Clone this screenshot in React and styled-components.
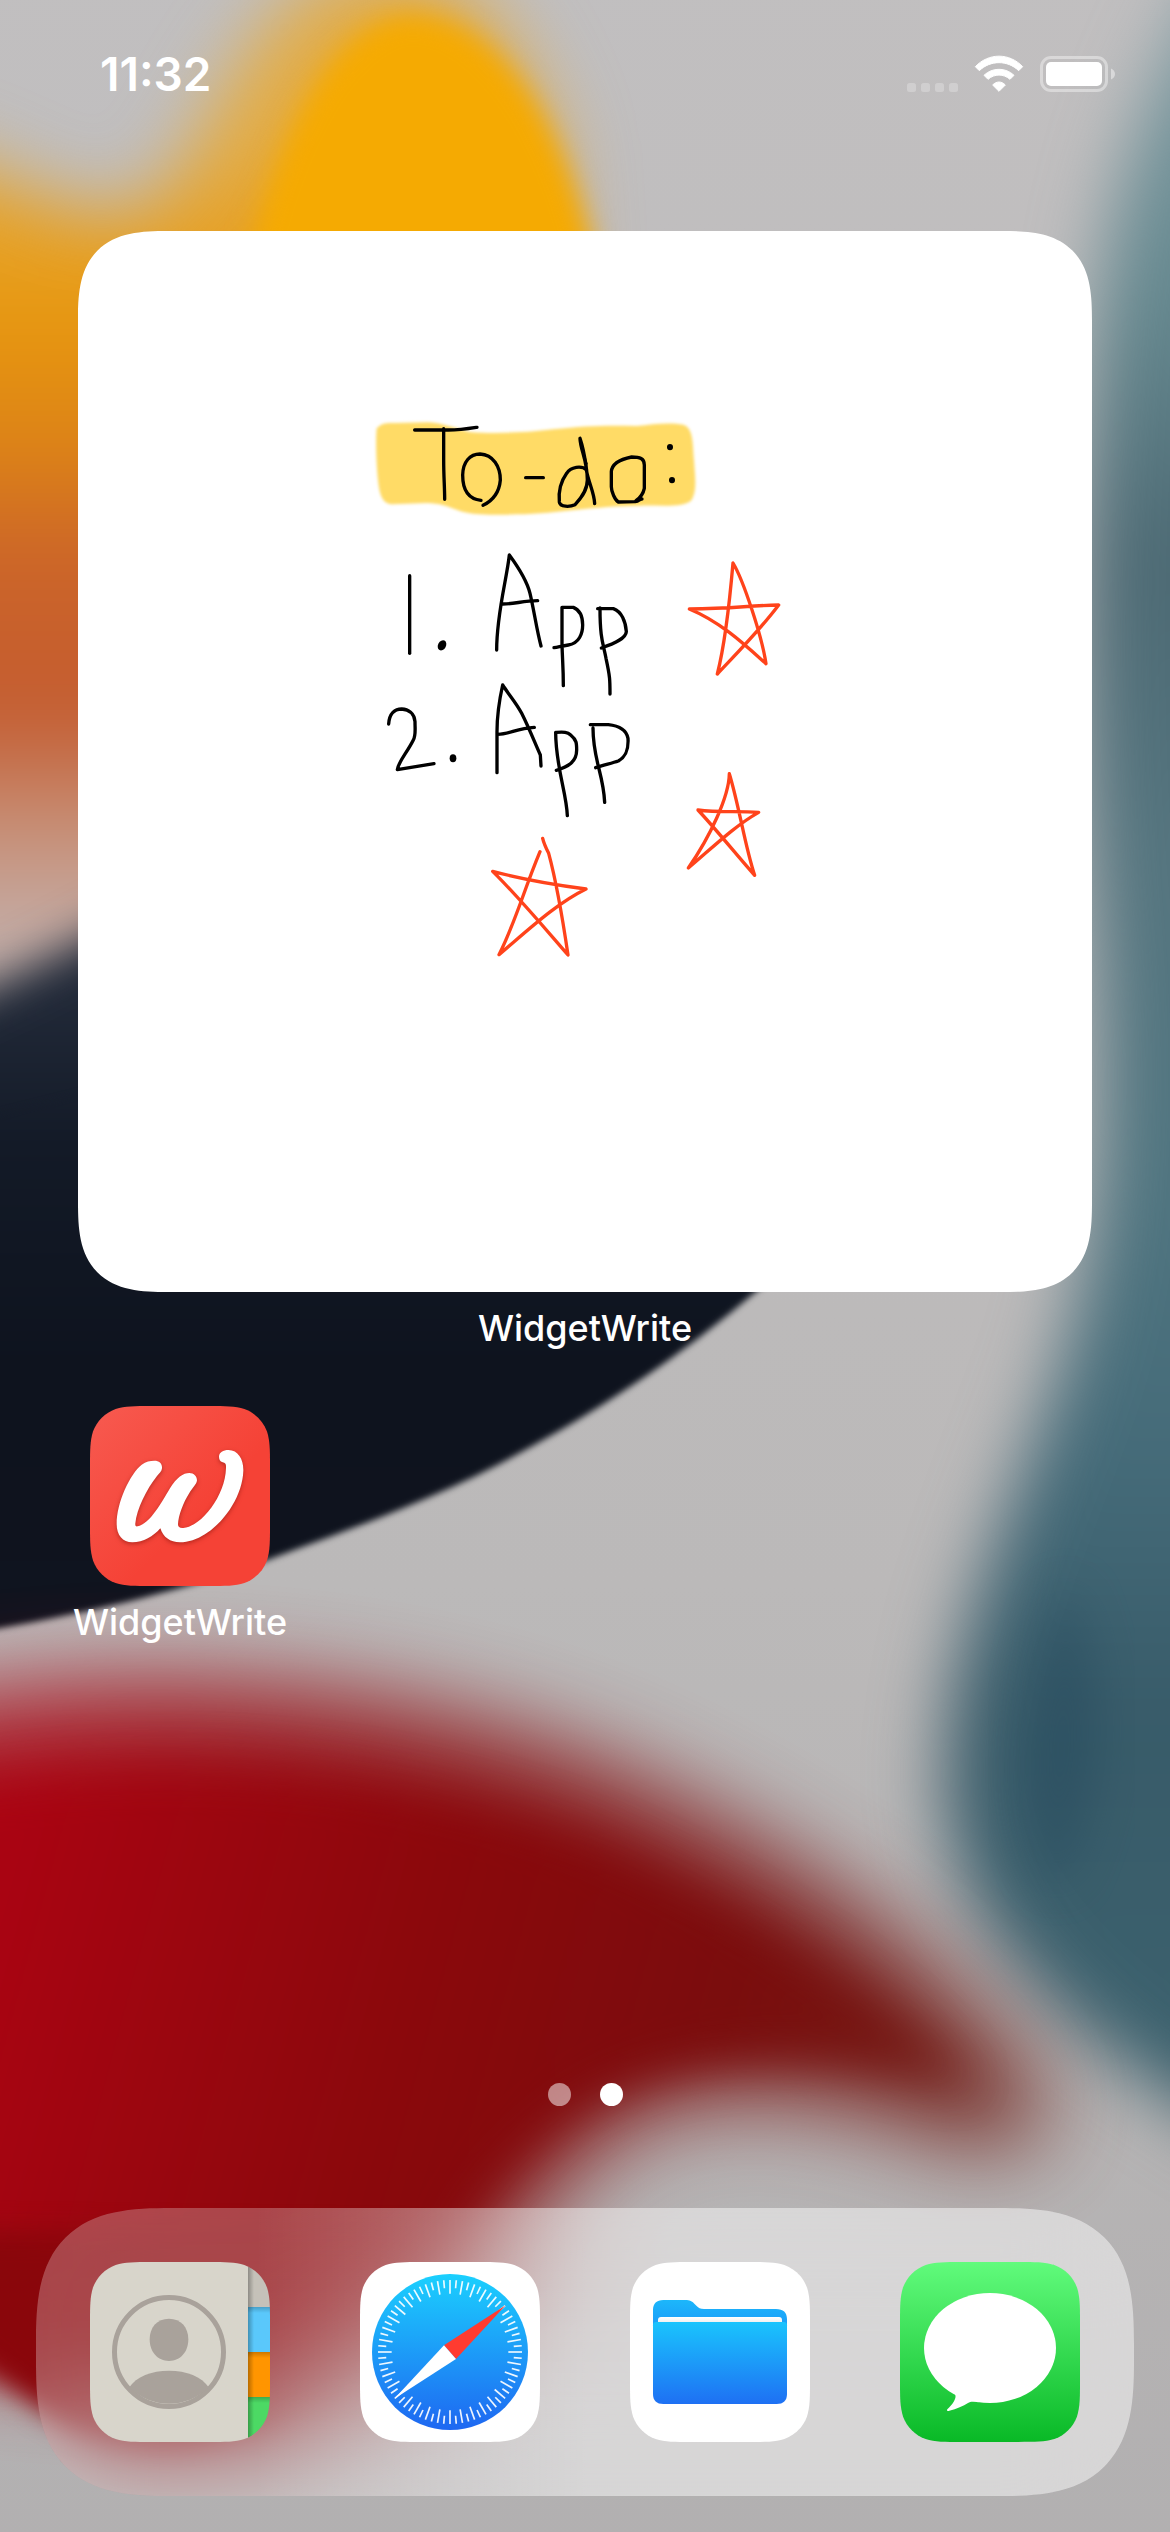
import React from "react";
import styled, { createGlobalStyle } from "styled-components";

const GlobalStyle = createGlobalStyle`
  *, *::before, *::after { box-sizing: border-box; }
  body {
    margin: 0;
    background: #b5b3b4;
    font-family: Inter, "Liberation Sans", sans-serif;
    -webkit-font-smoothing: antialiased;
  }
`;

const Home = styled.div`
  position: relative;
  isolation: isolate;
  overflow: hidden;
  display: flex;
  flex-direction: column;
  min-height: 100vh;
  color: #fff;
`;

const WallpaperLayer = styled.div`
  position: absolute;
  inset: 0;
  z-index: -1;
  svg { display: block; width: 100%; height: 100%; }
`;

const StatusBar = styled.header`
  display: flex;
  align-items: center;
  justify-content: space-between;
  height: 148px;
  padding: 0 54px 0 100px;
`;

const Clock = styled.time`
  font-size: 46px;
  line-height: 56px;
  font-weight: 600;
`;

const StatusIcons = styled.div`
  display: flex;
  align-items: center;
  gap: 16px;
  svg { display: block; }
`;

const Main = styled.main`
  flex: 1;
  display: flex;
  flex-direction: column;
  gap: 56px;
  padding-top: 83px;
`;

const WidgetFigure = styled.figure`
  display: flex;
  flex-direction: column;
  align-items: center;
  gap: 14px;
  margin: 0 78px;
`;

const WidgetCard = styled.div`
  width: 100%;
  background: #fff;
  border-radius: 68px;
  @supports (corner-shape: superellipse(1.5)) {
    border-radius: 90px;
    corner-shape: superellipse(1.5);
  }
  svg { display: block; width: 100%; height: auto; }
`;

const WidgetLabel = styled.figcaption`
  font-size: 36px;
  line-height: 44px;
  font-weight: 500;
`;

const AppGrid = styled.div`
  display: grid;
  grid-template-columns: repeat(4, 1fr);
  justify-items: center;
  padding: 0 45px;
`;

const AppButton = styled.button`
  display: flex;
  flex-direction: column;
  align-items: center;
  gap: 14px;
  padding: 0;
  border: 0;
  background: none;
  color: inherit;
  font-family: inherit;
  font-size: 36px;
  line-height: 44px;
  font-weight: 500;
  cursor: pointer;
  svg { display: block; width: 180px; height: 180px; }
`;

const PageDots = styled.nav`
  display: flex;
  justify-content: center;
  gap: 29px;
  margin-bottom: 102px;
`;

const PageDot = styled.button`
  width: 23px;
  height: 23px;
  padding: 0;
  border: 0;
  border-radius: 50%;
  background: ${(p) => (p.$active ? "#fff" : "rgba(255, 255, 255, 0.5)")};
  cursor: pointer;
`;

const Dock = styled.footer`
  display: grid;
  grid-template-columns: repeat(4, 1fr);
  justify-items: center;
  margin: 0 36px 36px;
  padding: 54px 9px;
  border-radius: 102px;
  background: linear-gradient(90deg, rgba(255, 255, 255, 0.26) 20%, rgba(255, 255, 255, 0.47) 50%);
  backdrop-filter: blur(56px);
  @supports (corner-shape: superellipse(1.5)) {
    border-radius: 136px;
    corner-shape: superellipse(1.5);
  }
`;

function Blur({ id, amount }) {
  return (
    <filter id={id} x="-50%" y="-50%" width="200%" height="200%" colorInterpolationFilters="sRGB">
      <feGaussianBlur stdDeviation={amount} />
    </filter>
  );
}

function Wallpaper() {
  return (
    <WallpaperLayer aria-hidden="true">
      <svg viewBox="0 0 725 1568" preserveAspectRatio="xMidYMid slice">
        <defs>
          <linearGradient id="wpBase" x1="0" y1="0" x2="0" y2="1">
            <stop offset="0" stopColor="#c2c0c1" />
            <stop offset="0.6" stopColor="#bbb9b9" />
            <stop offset="1" stopColor="#afadae" />
          </linearGradient>
          <linearGradient id="wpAmber" gradientUnits="userSpaceOnUse" x1="0" y1="90" x2="0" y2="620">
            <stop offset="0" stopColor="#e3ac44" />
            <stop offset="0.2" stopColor="#e8980f" />
            <stop offset="0.36" stopColor="#dc8218" />
            <stop offset="0.48" stopColor="#cc6529" />
            <stop offset="0.66" stopColor="#c45c30" />
            <stop offset="0.8" stopColor="#c79078" />
            <stop offset="0.92" stopColor="#c4aca6" />
            <stop offset="1" stopColor="#c0b0ac" />
          </linearGradient>
          <linearGradient id="wpNavy" gradientUnits="userSpaceOnUse" x1="0" y1="610" x2="0" y2="1010">
            <stop offset="0" stopColor="#222a39" />
            <stop offset="0.25" stopColor="#131a27" />
            <stop offset="0.6" stopColor="#0e131e" />
            <stop offset="1" stopColor="#10141f" />
          </linearGradient>
          <linearGradient id="wpTeal" gradientUnits="userSpaceOnUse" x1="0" y1="0" x2="0" y2="1330">
            <stop offset="0" stopColor="#7d9ba2" />
            <stop offset="0.14" stopColor="#65888f" />
            <stop offset="0.26" stopColor="#4d6a74" />
            <stop offset="0.4" stopColor="#55757f" />
            <stop offset="0.55" stopColor="#507580" />
            <stop offset="0.68" stopColor="#456b79" />
            <stop offset="0.8" stopColor="#385b69" />
            <stop offset="1" stopColor="#3d636f" />
          </linearGradient>
          <linearGradient id="wpRed" gradientUnits="userSpaceOnUse" x1="0" y1="1150" x2="640" y2="1320">
            <stop offset="0" stopColor="#aa0412" />
            <stop offset="0.4" stopColor="#8b080c" />
            <stop offset="0.7" stopColor="#7a0d0d" />
            <stop offset="1" stopColor="#6f2018" />
          </linearGradient>
          <Blur id="blurWide" amount={28} />
          <Blur id="blurSoft" amount={22} />
          <Blur id="blurMid" amount={14} />
          <Blur id="blurFine" amount={8} />
          <Blur id="blurEdge" amount={2} />
        </defs>
        <rect x="-200" y="-200" width="1125" height="1968" fill="url(#wpBase)" />
        <path d="M-120 85 C-30 70 30 140 80 130 C130 115 140 -10 235 -22 C290 -28 325 30 345 90 L365 400 L200 640 L-120 640 Z" fill="url(#wpAmber)" filter="url(#blurSoft)" />
        <path d="M138 260 C152 120 192 24 245 10 C305 0 354 76 374 186 L374 300 L138 300 Z" fill="#f5aa02" filter="url(#blurFine)" />
        <path d="M-80 640 C0 614 60 574 140 540 L300 600 L300 850 L-80 850 Z" fill="url(#wpNavy)" filter="url(#blurMid)" />
        <path d="M-40 700 L120 660 L520 680 L512 758 C490 782 478 792 461 806 C423 838 378 869 329 896 C278 925 225 944 166 966 C110 986 50 1001 -40 1015 Z" fill="url(#wpNavy)" filter="url(#blurEdge)" />
        <path d="M840 -60 L752 -20 C706 60 684 130 676 220 C668 330 666 430 674 540 C686 660 684 750 662 830 C634 920 585 1010 585 1100 C585 1190 650 1270 840 1362 Z" fill="url(#wpTeal)" filter="url(#blurSoft)" />
        <path d="M660 980 C630 1060 625 1120 655 1170 C685 1110 690 1050 660 980 Z" fill="#25495d" opacity="0.5" filter="url(#blurMid)" />
        <path d="M-140 1080 C20 1020 230 1030 380 1095 C500 1148 590 1215 645 1295 C660 1325 620 1340 585 1325 C520 1300 450 1290 400 1312 C350 1338 320 1390 290 1440 L220 1480 L-140 1450 Z" fill="url(#wpRed)" opacity="0.85" filter="url(#blurWide)" />
        <path d="M-140 1130 C60 1070 240 1090 370 1140 C450 1176 530 1222 600 1290 C500 1268 420 1268 360 1306 C310 1340 285 1380 262 1440 L-140 1470 Z" fill="url(#wpRed)" filter="url(#blurMid)" />
        <path d="M-140 1380 L262 1385 C245 1430 215 1470 170 1500 C120 1520 80 1520 40 1500 C15 1488 -10 1465 -60 1420 Z" fill="#8a060b" filter="url(#blurFine)" />
      </svg>
    </WallpaperLayer>
  );
}

const SQUIRCLE =
  "M61.9 0 H118.1 C135.9 0 144.8 0 154.4 3 C164.9 6.8 173.2 15.1 177 25.6 C180 35.2 180 44.1 180 61.9 V118.1 C180 135.9 180 144.8 177 154.4 C173.2 164.9 164.9 173.2 154.4 177 C144.8 180 135.9 180 118.1 180 H61.9 C44.1 180 35.2 180 25.6 177 C15.1 173.2 6.8 164.9 3 154.4 C0 144.8 0 135.9 0 118.1 V61.9 C0 44.1 0 35.2 3 25.6 C6.8 15.1 15.1 6.8 25.6 3 C35.2 0 44.1 0 61.9 0 Z";

function Gradient({ id, from, to, x2 = 0, y2 = 1 }) {
  return (
    <linearGradient id={id} x1="0" y1="0" x2={x2} y2={y2}>
      <stop offset="0" stopColor={from} />
      <stop offset="1" stopColor={to} />
    </linearGradient>
  );
}

function WidgetWriteIcon() {
  return (
    <svg viewBox="0 0 180 180" aria-hidden="true">
      <defs>
        <Gradient id="wwBg" from="#f75a50" to="#f54236" x2={0.6} y2={0.6} />
        <filter id="wwShadow" x="-20%" y="-20%" width="140%" height="150%" colorInterpolationFilters="sRGB">
          <feDropShadow dx="0" dy="5" stdDeviation="7" floodColor="#7a0d05" floodOpacity="0.5" />
        </filter>
      </defs>
      <path d={SQUIRCLE} fill="url(#wwBg)" />
      <g transform="translate(10 -7) scale(0.33333)">
        <path
          fill="#fff"
          filter="url(#wwShadow)"
          d="M163 185 C178 185 187 193 186 208 C185 218 178 222 171 231 C140 270 110 330 106 373 C105 381 108 383 113 382 C150 375 185 310 210 268 C230 235 250 222 268 222 C282 222 291 232 291 244 C290 256 278 266 268 282 C250 310 235 350 234 376 C234 385 240 388 250 387 C305 382 376 290 378 207 C379 196 376 191 368 190 C360 188 357 180 357 173 C357 160 370 153 385 153 C415 153 431 182 430 215 C427 315 330 430 240 430 C210 430 190 415 181 388 C160 412 130 430 97 430 C68 430 50 408 50 375 C50 310 90 225 125 197 C138 187 150 185 163 185 Z"
        />
      </g>
    </svg>
  );
}

const TABS = [
  { y: 90, h: 141, fill: "#c5c1b9" },
  { y: 231, h: 135, fill: "#5ac8fb" },
  { y: 366, h: 135, fill: "#ff9500" },
  { y: 501, h: 140, fill: "#4cd964" },
];

function ContactsIcon() {
  return (
    <svg viewBox="0 0 180 180" aria-hidden="true">
      <defs>
        <clipPath id="ctClip"><path d={SQUIRCLE} /></clipPath>
        <Gradient id="ctSide" from="rgba(0,0,0,0.28)" to="rgba(0,0,0,0)" x2={1} y2={0} />
        <Gradient id="ctTop" from="rgba(0,0,0,0.2)" to="rgba(0,0,0,0)" />
      </defs>
      <g clipPath="url(#ctClip)">
        <g transform="translate(-30 -32) scale(0.33333)">
          <rect x="88" y="94" width="478" height="546" fill="#d8d5cb" />
          {TABS.map((t) => (
            <rect key={t.y} x="564" y={t.y} width="70" height={t.h} fill={t.fill} />
          ))}
          {TABS.slice(1).map((t) => (
            <rect key={t.y} x="564" y={t.y} width="70" height="18" fill="url(#ctTop)" />
          ))}
          <rect x="564" y="90" width="18" height="550" fill="url(#ctSide)" />
          <circle cx="327" cy="366" r="163.5" fill="none" stroke="#a9a29b" strokeWidth="15" />
          <path d="M327 266 C363 266 385 292 385 328 C385 366 361 393 327 393 C293 393 269 366 269 328 C269 292 291 266 327 266 Z" fill="#a9a29b" />
          <path d="M208 472 C228 440 275 422 327 422 C379 422 426 440 446 472 A168 168 0 0 1 208 472 Z" fill="#a9a29b" />
        </g>
      </g>
    </svg>
  );
}

const TICKS = Array.from({ length: 72 }, (_, i) => i);

function SafariIcon() {
  return (
    <svg viewBox="0 0 180 180" aria-hidden="true">
      <defs><Gradient id="sfBg" from="#1bd0fe" to="#1e67f1" /></defs>
      <path d={SQUIRCLE} fill="#fff" />
      <g transform="translate(-300 -32) scale(0.33333)">
        <circle cx="1170" cy="366" r="234" fill="url(#sfBg)" />
        {TICKS.map((i) => (
          <line
            key={i}
            x1="1170"
            x2="1170"
            y1="150"
            y2={i % 2 ? 174 : 191}
            stroke="#fff"
            strokeOpacity="0.92"
            strokeWidth="5"
            transform={`rotate(${i * 5} 1170 366)`}
          />
        ))}
        <path d="M1337 226 L1152 346 L1188 387 Z" fill="#ff3b30" />
        <path d="M1003 506 L1152 346 L1188 387 Z" fill="#fff" />
      </g>
    </svg>
  );
}

function FilesIcon() {
  return (
    <svg viewBox="0 0 180 180" aria-hidden="true">
      <defs>
        <Gradient id="flBack" from="#1cb7fb" to="#1b98f8" />
        <Gradient id="flFront" from="#1ac4fd" to="#1e70f3" />
        <Gradient id="flPaper" from="#fff" to="#e9e9e9" />
      </defs>
      <path d={SQUIRCLE} fill="#fff" />
      <g transform="translate(-30 -32) scale(0.33333)">
        <path d="M159 240 C159 220 170 210 190 210 H256 C270 210 276 214 283 221 L290 228 C296 234 300 237 312 237 H528 C550 237 561 247 561 268 V300 H159 Z" fill="url(#flBack)" />
        <path d="M174 284 V270 Q174 261 183 261 H537 Q546 261 546 270 V284 Z" fill="url(#flPaper)" />
        <path d="M159 286 Q159 276 169 276 H551 Q561 276 561 286 V492 C561 512 550 522 530 522 H190 C170 522 159 512 159 492 Z" fill="url(#flFront)" />
      </g>
    </svg>
  );
}

function MessagesIcon() {
  return (
    <svg viewBox="0 0 180 180" aria-hidden="true">
      <defs><Gradient id="msBg" from="#61fb7c" to="#09b926" /></defs>
      <path d={SQUIRCLE} fill="url(#msBg)" />
      <g transform="translate(-300 -32) scale(0.33333)" fill="#fff">
        <ellipse cx="1170" cy="354" rx="198" ry="165" />
        <path d="M1055 484 C1068 491 1070 500 1062 514 C1057 523 1049 531 1042 538 C1039 542 1042 544 1048 542 C1070 537 1090 528 1104 519 C1112 514 1120 515 1135 517 L1160 480 Z" />
      </g>
    </svg>
  );
}

function CellularIcon() {
  return (
    <svg width="51" height="36" viewBox="0 0 51 36" role="img" aria-label="No signal">
      {[0, 14, 28, 42].map((x) => (
        <rect key={x} x={x} y="27" width="9" height="9" rx="2.5" fill="#fff" fillOpacity="0.25" />
      ))}
    </svg>
  );
}

function WifiIcon() {
  return (
    <svg width="50" height="38" viewBox="282 43 150 114" role="img" aria-label="Wi-Fi" fill="#fff" stroke="#fff" strokeWidth="3" strokeLinejoin="round">
      <path d="M286 78 C326 36 388 36 428 78 L416 90 C383 58 331 58 298 90 Z" />
      <path d="M312 104 C337 80 377 80 402 104 L390 116 C371 99 343 99 324 116 Z" />
      <path d="M357 152 L338 133 C349 121 365 121 376 133 Z" />
    </svg>
  );
}

function BatteryIcon() {
  return (
    <svg width="76" height="36" viewBox="0 0 76 36" role="img" aria-label="Battery full">
      <rect x="1.5" y="1.5" width="65" height="33" rx="9.5" fill="none" stroke="#fff" strokeOpacity="0.4" strokeWidth="3" />
      <rect x="6" y="6" width="56" height="24" rx="5" fill="#fff" />
      <path d="M71 12.5 C73.500 13.500 75 15.500 75 18 C75 20.500 73.500 22.500 71 23.500 Z" fill="#fff" fillOpacity="0.45" />
    </svg>
  );
}

function TodoSketch() {
  return (
    <svg viewBox="0 0 1014 1061" role="img" aria-label="To-do: 1. App 2. App">
      <defs>
        <Blur id="marker" amount={5} />
      </defs>
      <g fill="none" strokeWidth="10" strokeLinecap="round" strokeLinejoin="round">
        <g transform="translate(282 169) scale(0.33333)" stroke="#000">
          <path d="M50 85 C65 68 80 68 110 69 L205 67 C250 70 280 84 330 96 C400 102 500 98 580 88 C680 76 750 76 830 78 C880 72 930 66 970 74 C1000 84 998 130 1002 180 C1005 230 1012 270 995 300 C970 325 900 315 840 317 C700 318 600 340 470 343 C400 345 340 346 300 333 C260 318 240 310 200 309 L95 313 C65 310 58 280 54 240 C50 200 46 130 50 85 Z" fill="#ffdb66" stroke="none" filter="url(#marker)" />
          <path d="M164 90 H265 C300 90 325 86 351 82 M251 86 V180 C251 230 254 260 254 298" />
          <path d="M363 301 C325 297 308 270 308 225 C309 185 330 162 360 162 C400 164 421 200 421 240 C418 275 398 302 369 316" />
          <path d="M497 233 H550" />
          <path d="M660 115 C661 150 682 180 682 240 C682 275 658 300 645 314 C630 321 600 322 598 306 C595 275 602 245 620 220 C632 200 665 195 680 210 M660 115 C675 160 675 180 680 215 C687 250 703 280 704 311" />
          <path d="M660 115 L666 150 L680 215 L683 190 Z" fill="#000" stroke="none" />
          <path d="M846 297 C835 297 838 306 825 305 L775 306 C765 300 754 275 754 260 V215 C756 190 780 178 815 171 C840 171 853 175 853 195 V265 C850 280 838 295 828 302" />
          <path d="M930 141 V142 M936 240 V241" strokeWidth="18" />
          <path d="M149 527 V760" />
          <ellipse cx="246" cy="736" rx="12" ry="16" fill="#000" stroke="none" transform="rotate(28 246 736)" />
          <path d="M410 750 C410 640 440 540 448 465 C470 495 500 540 510 580 C522 630 530 690 543 738 M426 612 C460 613 490 602 533 602" />
          <path d="M606 622 V730 C607 780 610 800 610 857 M606 622 H640 C660 630 668 650 668 675 C668 700 658 730 625 735 C605 738 595 741 582 743" />
          <path d="M713 626 H760 C785 635 797 665 799 695 C798 715 765 730 724 744 M720 624 C720 720 730 730 738 775 C750 830 750 840 750 882" />
        </g>
        <g transform="translate(282 429) scale(0.33333)" stroke="#000">
          <path d="M86 192 C88 160 105 147 125 147 C145 148 163 160 165 185 C165 210 168 225 160 240 C140 280 115 305 112 329 L222 311" />
          <ellipse cx="279" cy="295" rx="10" ry="12" fill="#000" stroke="none" />
          <path d="M411 338 V215 C411 160 418 120 428 75 C445 102 470 130 485 160 C510 210 525 250 541 285 L543 318 M414 223 C450 223 470 204 523 202" />
          <path d="M622 467 C620 400 587 320 587 217 C610 216 622 215 632 225 C650 240 650 250 650 270 C650 305 625 320 589 331" />
          <path d="M691 194 H745 C785 198 800 215 804 235 C806 270 798 290 775 303 C755 310 730 315 707 323 M699 204 C699 300 730 340 734 427" />
        </g>
        <g transform="translate(282 169) scale(0.33333)" stroke="#ff431b">
          <path d="M1119 489 C1112 570 1098 720 1072 822 C1130 760 1200 690 1256 615 C1160 617 1120 626 988 627 C1080 665 1150 730 1218 791 C1206 710 1150 540 1119 489 Z" />
        </g>
        <g transform="translate(282 429) scale(0.33333)" stroke="#ff431b">
          <path d="M1108 341 C1107 410 1050 530 985 624 C1050 570 1120 500 1196 457 C1130 453 1070 458 1014 450 C1070 510 1130 585 1184 646 C1155 560 1138 440 1108 341 Z" />
          <path d="M540 575 C490 695 465 790 417 884 C510 805 590 730 678 687 C580 674 480 656 398 634 C475 710 550 800 624 885 C610 790 585 650 566 580 C556 560 552 552 548 535" />
        </g>
      </g>
    </svg>
  );
}

const DOCK_APPS = [
  { name: "Contacts", Icon: ContactsIcon },
  { name: "Safari", Icon: SafariIcon },
  { name: "Files", Icon: FilesIcon },
  { name: "Messages", Icon: MessagesIcon },
];

export default function App() {
  return (
    <Home>
      <GlobalStyle />
      <Wallpaper />
      <StatusBar>
        <Clock dateTime="11:32">11:32</Clock>
        <StatusIcons>
          <CellularIcon />
          <WifiIcon />
          <BatteryIcon />
        </StatusIcons>
      </StatusBar>
      <Main>
        <WidgetFigure>
          <WidgetCard><TodoSketch /></WidgetCard>
          <WidgetLabel>WidgetWrite</WidgetLabel>
        </WidgetFigure>
        <AppGrid>
          <AppButton type="button">
            <WidgetWriteIcon />
            WidgetWrite
          </AppButton>
        </AppGrid>
      </Main>
      <PageDots aria-label="Pages">
        <PageDot type="button" aria-label="Page 1" />
        <PageDot type="button" aria-label="Page 2" aria-current="page" $active />
      </PageDots>
      <Dock>
        {DOCK_APPS.map(({ name, Icon }) => (
          <AppButton key={name} type="button" aria-label={name}>
            <Icon />
          </AppButton>
        ))}
      </Dock>
    </Home>
  );
}
